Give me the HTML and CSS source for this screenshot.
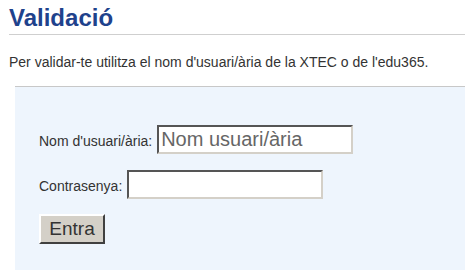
FILE: index.html
```html
<!DOCTYPE html>
<html>
<head>
<meta charset="utf-8"/>
<title>Validació</title>
<link rel="stylesheet" href="styles.css">
</head>
<body>
	<div class="page">
		<h1 class="title">Validació</h1>
		<p class="intro">Per validar-te utilitza el nom d'usuari/ària de la XTEC o de l'edu365.</p>
		<!-- formulari -->
		<form class="login-box" action="#" onsubmit="return false;">
			<div class="row">
				<label for="user">Nom d'usuari/ària:</label>
				<input type="text" id="user" class="field" placeholder="Nom usuari/ària">
			</div>
			<div class="row">
				<label for="pass">Contrasenya:</label>
				<input type="password" id="pass" class="field">
			</div>
			<div class="row">
				<button type="submit" class="btn">Entra</button>
			</div>
		</form>
	</div>
</body>
</html>
```

FILE: styles.css
```css
*{padding: 0;margin: 0}
html,body{
	width: 100%;
	height: 100%;
	overflow: hidden;
}
body{
	background: #fff;
	font-family: "Liberation Sans", Arial, sans-serif;
	color: #333;
}
.page{
	padding-left: 9px;
}
.title{
	font-size: 24px;
	line-height: 28px;
	font-weight: bold;
	color: #1f428c;
	padding-top: 4px;
	padding-bottom: 2px;
	border-bottom: 1px solid #cfcfcf;
}
.intro{
	font-size: 14px;
	line-height: 16px;
	margin-top: 19px;
	margin-bottom: 16px;
}
.login-box{
	margin-left: 6px;
	background: #eef5fd;
	border-top: 1px solid #c8c8c8;
	padding: 38px 0 26px 24px;
}
.row{
	display: flex;
	align-items: baseline;
	gap: 5px;
	margin-bottom: 16px;
}
.row:last-child{
	margin-bottom: 0;
	margin-top: -1px;
}
.row label{
	font-size: 14px;
	color: #333;
}
.field{
	box-sizing: border-box;
	width: 196px;
	height: 29px;
	padding: 0 2px;
	font-family: "Liberation Sans", Arial, sans-serif;
	font-size: 20px;
	color: #333;
	background: #fff;
	border: 2px solid #d4d0c8;
	border-top-color: #555;
	border-left-color: #555;
	outline: none;
}
.field::placeholder{
	color: #666;
	opacity: 1;
}
.btn{
	box-sizing: border-box;
	width: 66px;
	height: 30px;
	font-family: "Liberation Sans", Arial, sans-serif;
	font-size: 19px;
	color: #333;
	background: #d4d0c8;
	border: 2px solid #404040;
	border-top-color: #fff;
	border-left-color: #fff;
	cursor: pointer;
}
```
